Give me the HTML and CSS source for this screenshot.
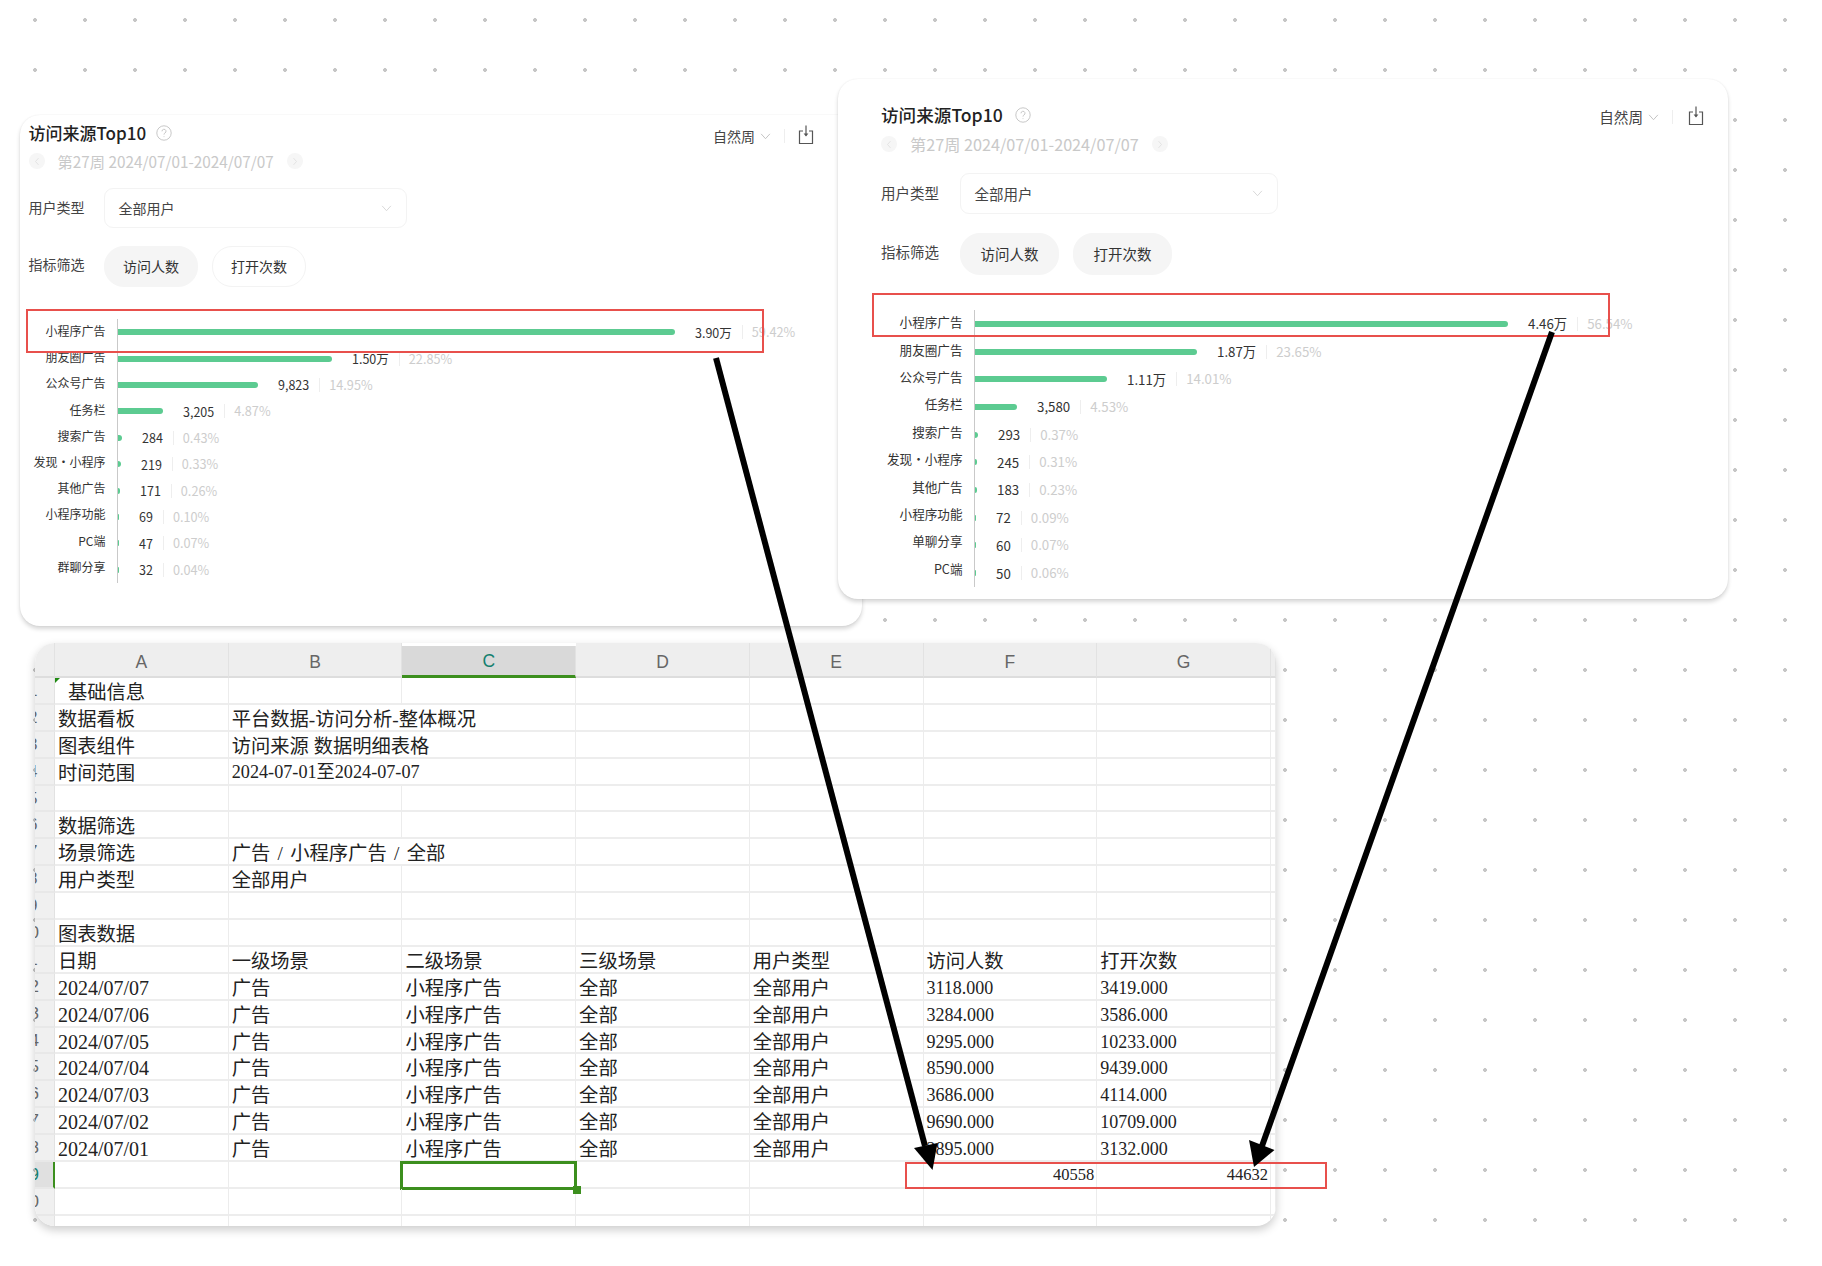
FILE: index.html
```html
<!DOCTYPE html>
<html lang="zh-CN">
<head>
<meta charset="utf-8">
<title>访问来源Top10</title>
<link rel="stylesheet" href="styles.css">
</head>
<body>
<section class="card card-a">
  <header class="head">
    <div class="title-wrap"><h2 class="title">访问来源Top10</h2><svg class="help" viewBox="0 0 16 16"><circle cx="8" cy="8" r="7.2"/><path d="M6 6.3a2 2 0 1 1 3 1.7c-.7.4-1 .8-1 1.6M8 11.3v.8"/></svg></div>
    <div class="actions"><span class="period">自然周</span><svg class="chev" viewBox="0 0 12 8"><path d="M1 1l5 5.5L11 1"/></svg><i class="vline"></i><svg class="export" viewBox="0 0 16 20"><path d="M5 6H1.5v12.5h13V6H11"/><path d="M8 .5v10"/><path class="tip" d="M5.6 8.6h4.8L8 11.6z"/></svg></div>
  </header>
  <div class="date-row"><span class="nav"><svg viewBox="0 0 8 12"><path d="M6 1.5 2 6l4 4.5"/></svg></span><span class="date">第27周 2024/07/01-2024/07/07</span><span class="nav"><svg viewBox="0 0 8 12"><path d="M2 1.5 6 6l-4 4.5"/></svg></span></div>
  <div class="filter select-row"><span class="flabel">用户类型</span><div class="select"><span>全部用户</span><svg class="chev light" viewBox="0 0 12 8"><path d="M1 1l5 5.5L11 1"/></svg></div></div>
  <div class="filter pill-row"><span class="flabel">指标筛选</span><span class="pill on">访问人数</span><span class="pill">打开次数</span></div>
  <div class="chart">
    <ul class="labels"><li>小程序广告</li><li>朋友圈广告</li><li>公众号广告</li><li>任务栏</li><li>搜索广告</li><li>发现・小程序</li><li>其他广告</li><li>小程序功能</li><li>PC端</li><li>群聊分享</li></ul>
    <div class="plot">
      <div class="row"><i class="bar" style="width:557px"></i><b>3.90万</b><em>59.42%</em></div>
      <div class="row"><i class="bar" style="width:214px"></i><b>1.50万</b><em>22.85%</em></div>
      <div class="row"><i class="bar" style="width:140px"></i><b>9,823</b><em>14.95%</em></div>
      <div class="row"><i class="bar" style="width:45px"></i><b>3,205</b><em>4.87%</em></div>
      <div class="row"><i class="bar" style="width:4px"></i><b>284</b><em>0.43%</em></div>
      <div class="row"><i class="bar" style="width:3px"></i><b>219</b><em>0.33%</em></div>
      <div class="row"><i class="bar" style="width:2px"></i><b>171</b><em>0.26%</em></div>
      <div class="row"><i class="bar" style="width:1px"></i><b>69</b><em>0.10%</em></div>
      <div class="row"><i class="bar" style="width:1px"></i><b>47</b><em>0.07%</em></div>
      <div class="row"><i class="bar" style="width:1px"></i><b>32</b><em>0.04%</em></div>
    </div>
  </div>
</section>

<section class="card card-b">
  <header class="head">
    <div class="title-wrap"><h2 class="title">访问来源Top10</h2><svg class="help" viewBox="0 0 16 16"><circle cx="8" cy="8" r="7.2"/><path d="M6 6.3a2 2 0 1 1 3 1.7c-.7.4-1 .8-1 1.6M8 11.3v.8"/></svg></div>
    <div class="actions"><span class="period">自然周</span><svg class="chev" viewBox="0 0 12 8"><path d="M1 1l5 5.5L11 1"/></svg><i class="vline"></i><svg class="export" viewBox="0 0 16 20"><path d="M5 6H1.5v12.5h13V6H11"/><path d="M8 .5v10"/><path class="tip" d="M5.6 8.6h4.8L8 11.6z"/></svg></div>
  </header>
  <div class="date-row"><span class="nav"><svg viewBox="0 0 8 12"><path d="M6 1.5 2 6l4 4.5"/></svg></span><span class="date">第27周 2024/07/01-2024/07/07</span><span class="nav"><svg viewBox="0 0 8 12"><path d="M2 1.5 6 6l-4 4.5"/></svg></span></div>
  <div class="filter select-row"><span class="flabel">用户类型</span><div class="select"><span>全部用户</span><svg class="chev light" viewBox="0 0 12 8"><path d="M1 1l5 5.5L11 1"/></svg></div></div>
  <div class="filter pill-row"><span class="flabel">指标筛选</span><span class="pill on">访问人数</span><span class="pill on">打开次数</span></div>
  <div class="chart">
    <ul class="labels"><li>小程序广告</li><li>朋友圈广告</li><li>公众号广告</li><li>任务栏</li><li>搜索广告</li><li>发现・小程序</li><li>其他广告</li><li>小程序功能</li><li>单聊分享</li><li>PC端</li></ul>
    <div class="plot">
      <div class="row"><i class="bar" style="width:533px"></i><b>4.46万</b><em>56.54%</em></div>
      <div class="row"><i class="bar" style="width:222px"></i><b>1.87万</b><em>23.65%</em></div>
      <div class="row"><i class="bar" style="width:132px"></i><b>1.11万</b><em>14.01%</em></div>
      <div class="row"><i class="bar" style="width:42px"></i><b>3,580</b><em>4.53%</em></div>
      <div class="row"><i class="bar" style="width:3px"></i><b>293</b><em>0.37%</em></div>
      <div class="row"><i class="bar" style="width:2px"></i><b>245</b><em>0.31%</em></div>
      <div class="row"><i class="bar" style="width:2px"></i><b>183</b><em>0.23%</em></div>
      <div class="row"><i class="bar" style="width:1px"></i><b>72</b><em>0.09%</em></div>
      <div class="row"><i class="bar" style="width:1px"></i><b>60</b><em>0.07%</em></div>
      <div class="row"><i class="bar" style="width:1px"></i><b>50</b><em>0.06%</em></div>
    </div>
  </div>
</section>

<section class="sheet">
  <div class="ch corner"></div><div class="ch">A</div><div class="ch">B</div><div class="ch active">C</div><div class="ch">D</div><div class="ch">E</div><div class="ch">F</div><div class="ch">G</div><div class="ch"></div>

  <div class="rh one">1</div><div class="c indent first">基础信息</div><div class="c"></div><div class="c"></div><div class="c"></div><div class="c"></div><div class="c"></div><div class="c"></div><div class="c"></div>
  <div class="rh one">2</div><div class="c">数据看板</div><div class="c wide">平台数据-访问分析-整体概况</div><div class="c"></div><div class="c"></div><div class="c"></div><div class="c"></div><div class="c"></div>
  <div class="rh one">3</div><div class="c">图表组件</div><div class="c wide">访问来源 数据明细表格</div><div class="c"></div><div class="c"></div><div class="c"></div><div class="c"></div><div class="c"></div>
  <div class="rh one">4</div><div class="c">时间范围</div><div class="c wide range">2024-07-01至2024-07-07</div><div class="c"></div><div class="c"></div><div class="c"></div><div class="c"></div><div class="c"></div>
  <div class="rh one">5</div><div class="c"></div><div class="c"></div><div class="c"></div><div class="c"></div><div class="c"></div><div class="c"></div><div class="c"></div><div class="c"></div>
  <div class="rh one">6</div><div class="c">数据筛选</div><div class="c"></div><div class="c"></div><div class="c"></div><div class="c"></div><div class="c"></div><div class="c"></div><div class="c"></div>
  <div class="rh one">7</div><div class="c">场景筛选</div><div class="c wide scene">广告 / 小程序广告 / 全部</div><div class="c"></div><div class="c"></div><div class="c"></div><div class="c"></div><div class="c"></div>
  <div class="rh one">8</div><div class="c">用户类型</div><div class="c">全部用户</div><div class="c"></div><div class="c"></div><div class="c"></div><div class="c"></div><div class="c"></div><div class="c"></div>
  <div class="rh one">9</div><div class="c"></div><div class="c"></div><div class="c"></div><div class="c"></div><div class="c"></div><div class="c"></div><div class="c"></div><div class="c"></div>
  <div class="rh">10</div><div class="c">图表数据</div><div class="c"></div><div class="c"></div><div class="c"></div><div class="c"></div><div class="c"></div><div class="c"></div><div class="c"></div>
  <div class="rh">11</div><div class="c">日期</div><div class="c">一级场景</div><div class="c">二级场景</div><div class="c">三级场景</div><div class="c">用户类型</div><div class="c">访问人数</div><div class="c">打开次数</div><div class="c"></div>
  <div class="rh">12</div><div class="c d">2024/07/07</div><div class="c">广告</div><div class="c">小程序广告</div><div class="c">全部</div><div class="c">全部用户</div><div class="c n">3118.000</div><div class="c n">3419.000</div><div class="c n">1</div>
  <div class="rh">13</div><div class="c d">2024/07/06</div><div class="c">广告</div><div class="c">小程序广告</div><div class="c">全部</div><div class="c">全部用户</div><div class="c n">3284.000</div><div class="c n">3586.000</div><div class="c n">1</div>
  <div class="rh">14</div><div class="c d">2024/07/05</div><div class="c">广告</div><div class="c">小程序广告</div><div class="c">全部</div><div class="c">全部用户</div><div class="c n">9295.000</div><div class="c n">10233.000</div><div class="c n">1</div>
  <div class="rh">15</div><div class="c d">2024/07/04</div><div class="c">广告</div><div class="c">小程序广告</div><div class="c">全部</div><div class="c">全部用户</div><div class="c n">8590.000</div><div class="c n">9439.000</div><div class="c n">1</div>
  <div class="rh">16</div><div class="c d">2024/07/03</div><div class="c">广告</div><div class="c">小程序广告</div><div class="c">全部</div><div class="c">全部用户</div><div class="c n">3686.000</div><div class="c n">4114.000</div><div class="c n">1</div>
  <div class="rh">17</div><div class="c d">2024/07/02</div><div class="c">广告</div><div class="c">小程序广告</div><div class="c">全部</div><div class="c">全部用户</div><div class="c n">9690.000</div><div class="c n">10709.000</div><div class="c n">1</div>
  <div class="rh">18</div><div class="c d">2024/07/01</div><div class="c">广告</div><div class="c">小程序广告</div><div class="c">全部</div><div class="c">全部用户</div><div class="c n">2895.000</div><div class="c n">3132.000</div><div class="c n">1</div>
  <div class="rh sel">19</div><div class="c"></div><div class="c"></div><div class="c selected"><i class="handle"></i></div><div class="c"></div><div class="c"></div><div class="c sum">40558</div><div class="c sum">44632</div><div class="c"></div>
  <div class="rh">20</div><div class="c"></div><div class="c"></div><div class="c"></div><div class="c"></div><div class="c"></div><div class="c"></div><div class="c"></div><div class="c"></div>
  <div class="rh"></div><div class="c"></div><div class="c"></div><div class="c"></div><div class="c"></div><div class="c"></div><div class="c"></div><div class="c"></div><div class="c"></div>
</section>

<div class="mark mark-a"></div>
<div class="mark mark-b"></div>
<div class="mark mark-c"></div>

<svg class="arrows" viewBox="0 0 1822 1266">
  <path class="shaft" d="M716 358 925 1146"/>
  <path class="head-tip" d="M914 1148 937.500 1143 932.500 1170z"/>
  <path class="shaft" d="M1552 332 1262 1146"/>
  <path class="head-tip" d="M1249 1140 1274.500 1150 1254 1167z"/>
</svg>
</body>
</html>
```

FILE: styles.css
```css
* { box-sizing: border-box; }

html, body {
  margin: 0;
  padding: 0;
}

body {
  position: relative;
  width: 1822px;
  height: 1266px;
  overflow: hidden;
  font-family: "Noto Sans CJK SC", "Noto Sans", sans-serif;
  color: #333;
  background-color: #fff;
  background-image: radial-gradient(circle at 25px 25px, #c6c6c6 0, #c6c6c6 1.6px, transparent 2.2px);
  background-size: 50px 50px;
  background-position: 10px -5px;
}

/* Free-canvas collage: cards, sheet, annotations */
.card {
  position: absolute;
  display: flex;
  flex-direction: column;
  background: #fff;
  border-radius: 20px;
  box-shadow: 0 3px 4px rgba(0, 0, 0, .16), 0 0 2px rgba(0, 0, 0, .07);
}

.card-a {
  left: 20px;
  top: 115px;
  width: 842px;
  height: 511px;
  padding: 5px 48px 0 8.5px;
  --title: 17px;
  --label: 14px;
  --date: 15.300px;
  --date-top: 5px;
  --select-top: 17px;
  --pill-top: 18px;
  --chart-top: 32px;
  --flabel-w: 75.500px;
  --flabel-sel: -3px;
  --select-w: 303px;
  --select-h: 40px;
  --pill-w: 94px;
  --pill-h: 41px;
  --pill-gap: 14px;
  --axis-label-w: 88.500px;
  --axis-label-fs: 12px;
  --label-h: 26.200px;
  --label-shift: -1px;
  --row-h: 26.400px;
  --value: 12.500px;
  --pct: 12.700px;
  --period: 14px;
  --vline-r: 13px;
  --help-gap: 10px;
  z-index: 1;
}

.card-b {
  left: 838px;
  top: 79px;
  width: 890px;
  height: 520px;
  padding: 23px 24px 0 43px;
  --title: 17.600px;
  --label: 14.500px;
  --date: 16.200px;
  --date-top: 6px;
  --select-top: 19px;
  --pill-top: 19px;
  --chart-top: 35px;
  --flabel-w: 79px;
  --flabel-sel: -1.500px;
  --select-w: 318px;
  --select-h: 41px;
  --pill-w: 99px;
  --pill-h: 42px;
  --pill-gap: 14px;
  --axis-label-w: 93px;
  --axis-label-fs: 12.600px;
  --label-h: 27.400px;
  --label-shift: -1.700px;
  --row-h: 27.700px;
  --value: 13.300px;
  --pct: 13.300px;
  --period: 14.600px;
  --vline-r: 15px;
  --help-gap: 12px;
  z-index: 2;
}

.card-b .actions { margin-top: 4px; }

.head {
  display: flex;
  justify-content: space-between;
  align-items: center;
  height: 26px;
}

.title-wrap {
  display: flex;
  align-items: center;
  gap: var(--help-gap);
}

.title {
  margin: 0;
  font-size: var(--title);
  font-weight: 500;
  line-height: 26px;
  color: #222;
}

.help {
  width: 16px;
  height: 16px;
  fill: none;
  stroke: #c8c8c8;
  stroke-width: 1;
}

.actions {
  display: flex;
  align-items: center;
  margin-top: 6px;
}

.period {
  font-size: var(--period);
  line-height: 20px;
  color: #444;
}

.chev {
  width: 11px;
  height: 7px;
  margin-left: 5px;
  fill: none;
  stroke: #bbb;
  stroke-width: 1;
}

.vline {
  width: 1px;
  height: 14px;
  margin: 0 var(--vline-r) 0 13px;
  background: #eee;
}

.export {
  width: 16px;
  height: 20px;
  margin-top: -2px;
  fill: none;
  stroke: #555;
  stroke-width: 1.200;
}

.export .tip {
  fill: #555;
  stroke: none;
}

.date-row {
  display: flex;
  align-items: center;
  gap: 13px;
  height: 20px;
  margin-top: var(--date-top);
}

.date {
  font-size: var(--date);
  line-height: 20px;
  color: #c9c9c9;
  white-space: nowrap;
}

.nav {
  display: flex;
  align-items: center;
  justify-content: center;
  width: 16px;
  height: 16px;
  border-radius: 50%;
  background: #f6f6f6;
}

.nav svg {
  width: 6px;
  height: 9px;
  fill: none;
  stroke: #dcdcdc;
  stroke-width: 1;
}

.filter {
  display: flex;
  align-items: center;
}

.select-row { margin-top: var(--select-top); }
.pill-row { margin-top: var(--pill-top); }

.flabel {
  width: var(--flabel-w);
  margin-top: var(--flabel-sel);
  flex: none;
  font-size: var(--label);
  line-height: 20px;
  color: #444;
}

.pill-row .flabel { margin-top: -5px; }

.select {
  display: flex;
  align-items: center;
  justify-content: space-between;
  width: var(--select-w);
  height: var(--select-h);
  padding: 0 14px 0 13.500px;
  border: 1px solid #f3f3f3;
  border-radius: 9px;
  font-size: var(--label);
  color: #444;
}

.chev.light { stroke: #d4d4d4; }

.pill {
  display: flex;
  align-items: center;
  justify-content: center;
  width: var(--pill-w);
  height: var(--pill-h);
  margin-right: var(--pill-gap);
  padding-bottom: 2px;
  border: 1px solid #f3f3f3;
  border-radius: 20px;
  font-size: var(--label);
  color: #333;
}

.pill.on {
  background: #f5f5f5;
  border-color: #f5f5f5;
}

.chart {
  display: flex;
  margin-top: var(--chart-top);
}

.labels {
  width: var(--axis-label-w);
  margin: var(--label-shift) 0 0;
  padding: 0 11.500px 0 0;
  list-style: none;
  font-size: var(--axis-label-fs);
  color: #333;
  text-align: right;
}

.labels li {
  height: var(--label-h);
  line-height: var(--label-h);
  white-space: nowrap;
}

.plot {
  display: flex;
  flex-direction: column;
  border-left: 1px solid #c9c9c9;
}

.row {
  display: flex;
  align-items: center;
  height: var(--row-h);
  font-size: var(--value);
  white-space: nowrap;
}

.bar {
  height: 6px;
  margin-right: 20px;
  background: #5ccb91;
  border-radius: 0 3px 3px 0;
}

.row b {
  font-weight: 400;
  color: #333;
}

.row em {
  margin-left: 10px;
  padding-left: 9px;
  border-left: 1px solid #eee;
  font-size: var(--pct);
  font-style: normal;
  line-height: 14px;
  color: #cdcdcd;
}

/* Spreadsheet */
.sheet {
  position: absolute;
  left: 35px;
  top: 643px;
  width: 1241px;
  height: 583px;
  display: grid;
  grid-template-columns: 20px repeat(7, 173.710px) 5px;
  grid-template-rows: 35px repeat(20, 26.900px) 12px;
  overflow: hidden;
  background: #fff;
  border-radius: 20px;
  box-shadow: 0 4px 10px rgba(0, 0, 0, .2);
  font-family: "Liberation Serif", "Noto Sans CJK SC", serif;
  font-size: 19.300px;
  color: #222;
  z-index: 1;
}

.ch {
  display: flex;
  align-items: center;
  justify-content: center;
  padding-top: 5px;
  background: #eee;
  border-right: 1px solid #e2e2e2;
  border-bottom: 2px solid #ddd;
  font-family: "Liberation Sans", sans-serif;
  font-size: 17.500px;
  color: #666;
}

.ch.active {
  margin-top: 3px;
  padding-top: 2px;
  background: #d9d9d9;
  border-bottom: 3px solid #3c8f1e;
  color: #14806f;
}

.rh {
  overflow: hidden;
  background: #f0f0f0;
  border-bottom: 2px solid #e8e8e8;
  border-right: 1px solid #e2e2e2;
  font-family: "Liberation Sans", sans-serif;
  font-size: 17px;
  line-height: 26px;
  color: #666;
  text-indent: -15px;
  white-space: nowrap;
}

.rh.one { text-indent: -7px; }

.rh.sel {
  background: #e0e0e0;
  border-right: 2px solid #3c8f1e;
  color: #14806f;
}

.c {
  position: relative;
  padding: 3px 0 0 3px;
  border-right: 1px solid #ececec;
  border-bottom: 2px solid #ededed;
  line-height: 24px;
  white-space: nowrap;
}

.c.wide { grid-column: span 2; }
.c.range { padding-top: 1px; font-size: 18.200px; }
.c.scene { word-spacing: 2.500px; }
.c.indent { padding-left: 13px; }
.c.d { padding-top: 2px; font-size: 20px; }
.c.n { padding-top: 2px; font-size: 18px; overflow: hidden; }

.c.first::before {
  content: "";
  position: absolute;
  left: 0;
  top: 0;
  border-top: 5px solid #1f8a12;
  border-right: 5px solid transparent;
}

.c.sum {
  padding: 1px 2px 0 0;
  font-size: 16.500px;
  text-align: right;
}

.c.selected {
  margin: -1px -1px 0 -2px;
  height: 29px;
  border: 3px solid #3c8f1e;
  background: #fff;
}

.handle {
  position: absolute;
  right: -7px;
  bottom: -7px;
  width: 8px;
  height: 8px;
  background: #3c8f1e;
  z-index: 2;
}

/* Annotations */
.mark {
  position: absolute;
  border: 2px solid #e8504c;
  z-index: 3;
}

.mark-a { left: 26px; top: 309px; width: 738px; height: 44px; }
.mark-b { left: 872px; top: 293px; width: 738px; height: 44px; }
.mark-c { left: 905px; top: 1162px; width: 422px; height: 27px; }

.arrows {
  position: absolute;
  left: 0;
  top: 0;
  width: 1822px;
  height: 1266px;
  z-index: 4;
  pointer-events: none;
}

.shaft {
  fill: none;
  stroke: #000;
  stroke-width: 6;
}

.head-tip {
  fill: #000;
}
```
